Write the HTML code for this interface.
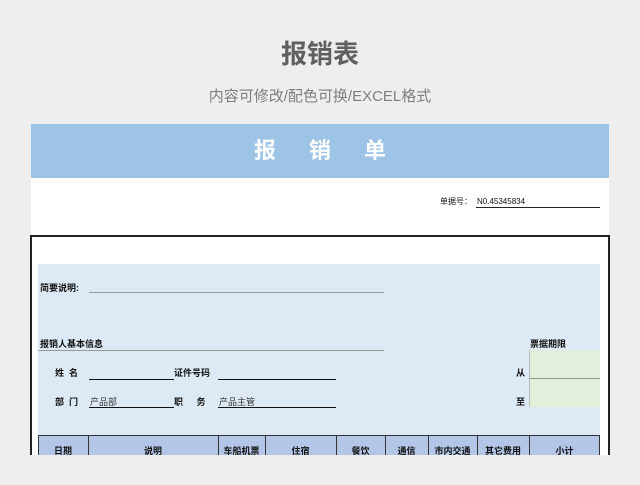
<!DOCTYPE html>
<html><head><meta charset="utf-8"><style>
*{margin:0;padding:0;box-sizing:border-box}
body{width:640px;height:485px;background:#eeeeee;position:relative;overflow:hidden;font-family:"Liberation Sans","Noto Sans CJK SC",sans-serif}
.a{position:absolute;white-space:nowrap}
.s{font-size:9px;color:#111;line-height:10px}
.ln{position:absolute;height:0;border-top:1px solid #444}
.col{position:absolute;top:0;bottom:0;border-left:1px solid #333}
</style></head><body>
<div class="a" style="left:0;width:640px;top:38px;text-align:center;font-size:26px;color:#606060;line-height:32px;font-weight:bold">报销表</div>
<div class="a" style="left:0;width:640px;top:88px;text-align:center;font-size:15px;color:#7f7f7f;line-height:18px">内容可修改/配色可换/EXCEL格式</div>
<div class="a" style="left:31px;top:124px;width:578px;height:331px;background:#fff"></div>
<div class="a" style="left:31px;top:124px;width:578px;height:54px;background:#9dc3e6;color:#fff;font-weight:bold;font-size:22px;text-align:center;line-height:54px;letter-spacing:0">报&emsp;&ensp;销&emsp;&ensp;单</div>
<div class="a s" style="left:440px;top:197px;font-size:8px">单据号：</div>
<div class="a s" style="left:477px;top:197px;font-size:8px">N0.45345834</div>
<div class="ln" style="left:476px;top:207px;width:124px;border-color:#222"></div>
<div class="a" style="left:30px;top:235px;width:580px;height:230px;border:2px solid #222;border-bottom:none"></div>
<div class="a" style="left:38px;top:264px;width:562px;height:172px;background:#dde9f5"></div>
<div class="a s" style="left:40px;top:283px;font-weight:bold">简要说明:</div>
<div class="ln" style="left:89px;top:292px;width:295px;border-color:#999"></div>
<div class="a s" style="left:40px;top:339px;font-weight:bold">报销人基本信息</div>
<div class="ln" style="left:38px;top:350px;width:346px;border-color:#999"></div>
<div class="a s" style="left:530px;top:339px;font-weight:bold">票据期限</div>
<div class="a" style="left:529px;top:350px;width:71px;height:57px;background:#e2efda;border-left:1px solid #bbb"></div>
<div class="ln" style="left:529px;top:378px;width:71px;border-color:#999"></div>
<div class="a s" style="left:55px;top:368px;font-weight:bold">姓&nbsp;&nbsp;名</div>
<div class="ln" style="left:89px;top:379px;width:85px;border-color:#111"></div>
<div class="a s" style="left:174px;top:368px;font-weight:bold">证件号码</div>
<div class="ln" style="left:218px;top:379px;width:118px;border-color:#111"></div>
<div class="a s" style="left:516px;top:368px;font-weight:bold">从</div>
<div class="a s" style="left:55px;top:397px;font-weight:bold">部&nbsp;&nbsp;门</div>
<div class="a s" style="left:90px;top:397px;color:#333">产品部</div>
<div class="ln" style="left:89px;top:407px;width:85px;border-color:#111"></div>
<div class="a s" style="left:174px;top:397px;font-weight:bold">职&emsp;&ensp;务</div>
<div class="a s" style="left:219px;top:397px;color:#333">产品主管</div>
<div class="ln" style="left:218px;top:407px;width:118px;border-color:#111"></div>
<div class="a s" style="left:516px;top:397px;font-weight:bold">至</div>
<div class="a" style="left:38px;top:435px;width:562px;height:20px;background:#b4c6e7;border-top:1px solid #333;border-right:1px solid #333">
<div class="col" style="left:0"></div><div class="col" style="left:50px"></div><div class="col" style="left:180px"></div><div class="col" style="left:227px"></div><div class="col" style="left:298px"></div><div class="col" style="left:347px"></div><div class="col" style="left:390px"></div><div class="col" style="left:439px"></div><div class="col" style="left:491px"></div>
</div>
<div class="a s" style="top:446px;left:38px;width:50px;text-align:center;font-weight:bold">日期</div>
<div class="a s" style="top:446px;left:88px;width:130px;text-align:center;font-weight:bold">说明</div>
<div class="a s" style="top:446px;left:218px;width:47px;text-align:center;font-weight:bold">车船机票</div>
<div class="a s" style="top:446px;left:265px;width:71px;text-align:center;font-weight:bold">住宿</div>
<div class="a s" style="top:446px;left:336px;width:49px;text-align:center;font-weight:bold">餐饮</div>
<div class="a s" style="top:446px;left:385px;width:43px;text-align:center;font-weight:bold">通信</div>
<div class="a s" style="top:446px;left:428px;width:49px;text-align:center;font-weight:bold">市内交通</div>
<div class="a s" style="top:446px;left:477px;width:52px;text-align:center;font-weight:bold">其它费用</div>
<div class="a s" style="top:446px;left:529px;width:71px;text-align:center;font-weight:bold">小计</div>
<div class="a" style="left:0;top:455px;width:640px;height:30px;background:#eeeeee"></div>
</body></html>
